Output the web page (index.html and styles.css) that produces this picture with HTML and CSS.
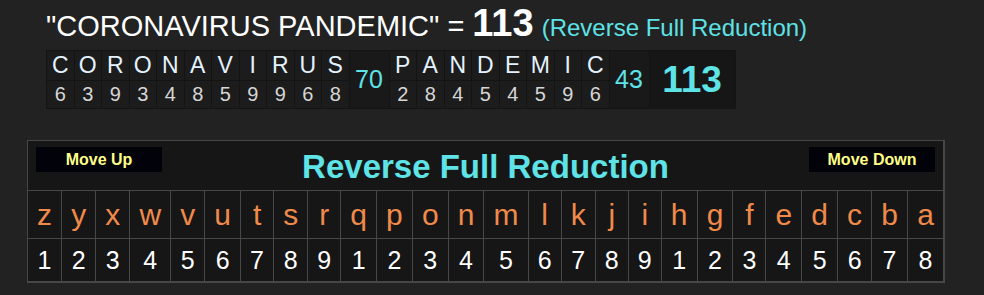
FILE: index.html
```html
<!DOCTYPE html>
<html lang="en">
<head>
  <meta charset="UTF-8">
  <title>Reverse Full Reduction</title>
  <link rel="stylesheet" href="styles.css">
</head>
<body>
  <div id="phraseBox">
    <div class="headline">
      <span class="phrase">"CORONAVIRUS PANDEMIC" =</span>
      <span class="total">113</span>
      <span class="cipherName">(Reverse Full Reduction)</span>
    </div>
    <table class="breakdown">
      <tr>
        <td class="ltr">C</td><td class="ltr">O</td><td class="ltr">R</td><td class="ltr">O</td><td class="ltr">N</td><td class="ltr">A</td><td class="ltr">V</td><td class="ltr">I</td><td class="ltr">R</td><td class="ltr">U</td><td class="ltr">S</td>
        <td class="wordSum" rowspan="2">70</td>
        <td class="ltr">P</td><td class="ltr">A</td><td class="ltr">N</td><td class="ltr">D</td><td class="ltr">E</td><td class="ltr">M</td><td class="ltr">I</td><td class="ltr">C</td>
        <td class="wordSum" rowspan="2">43</td>
        <td class="grandSum" rowspan="2">113</td>
      </tr>
      <tr>
        <td class="val">6</td><td class="val">3</td><td class="val">9</td><td class="val">3</td><td class="val">4</td><td class="val">8</td><td class="val">5</td><td class="val">9</td><td class="val">9</td><td class="val">6</td><td class="val">8</td>
        <td class="val">2</td><td class="val">8</td><td class="val">4</td><td class="val">5</td><td class="val">4</td><td class="val">5</td><td class="val">9</td><td class="val">6</td>
      </tr>
    </table>
  </div>

  <table class="cipherChart">
    <tr>
      <td class="chartHead" colspan="26">
        <div class="headBar">
          <button class="moveBtn">Move Up</button>
          <span class="chartTitle">Reverse Full Reduction</span>
          <button class="moveBtn">Move Down</button>
        </div>
      </td>
    </tr>
    <tr class="letters">
      <td>z</td><td>y</td><td>x</td><td>w</td><td>v</td><td>u</td><td>t</td><td>s</td><td>r</td><td>q</td><td>p</td><td>o</td><td>n</td>
      <td>m</td><td>l</td><td>k</td><td>j</td><td>i</td><td>h</td><td>g</td><td>f</td><td>e</td><td>d</td><td>c</td><td>b</td><td>a</td>
    </tr>
    <tr class="values">
      <td>1</td><td>2</td><td>3</td><td>4</td><td>5</td><td>6</td><td>7</td><td>8</td><td>9</td><td>1</td><td>2</td><td>3</td><td>4</td>
      <td>5</td><td>6</td><td>7</td><td>8</td><td>9</td><td>1</td><td>2</td><td>3</td><td>4</td><td>5</td><td>6</td><td>7</td><td>8</td>
    </tr>
  </table>
</body>
</html>
```

FILE: styles.css
```css
/* dark calculator look */
body {
  margin: 0;
  padding: 0;
  background: #222222;
  font-family: "Liberation Sans", Arial, sans-serif;
  color: #fff;
}
#phraseBox {
  padding: 3px 0 0 46px;
}
.headline {
  display: flex;
  align-items: baseline;
  gap: 8px;
  height: 47px;
  line-height: 40px;
}
.phrase {
  font-size: 29px;
}
.total {
  font-size: 38px;
  font-weight: bold;
}
.cipherName {
  font-size: 24px;
  color: #5ee3e6;
}

/* letter by letter breakdown */
.breakdown {
  border-collapse: separate;
  border-spacing: 1px;
  background: #141414;
  text-align: center;
}
.breakdown td {
  padding: 0;
}
.ltr {
  width: 26.5px;
  height: 29px;
  background: #1c1c1c;
  font-size: 23px;
  color: #e4f2ff;
}
.val {
  height: 27px;
  background: #1c1c1c;
  font-size: 20px;
  color: #d6d6d6;
}
.wordSum {
  width: 39px;
  font-size: 25px;
  color: #5ee3e6;
  background: #191919;
}
.grandSum {
  width: 85px;
  font-size: 37px;
  font-weight: bold;
  color: #5ee3e6;
  background: #161616;
}

/* cipher chart */
.cipherChart {
  margin: 31px 0 0 27px;
  width: 918px;
  border-collapse: collapse;
  background: #161616;
  border: 1px solid #474747;
  border-bottom-width: 2px;
  border-right-width: 2px;
  text-align: center;
}
.cipherChart td {
  border: 1px solid #474747;
  padding: 0 9px;
}
.cipherChart .chartHead {
  padding: 0;
  height: 49px;
  vertical-align: top;
}
.headBar {
  display: flex;
  justify-content: space-between;
  align-items: flex-start;
  padding: 6px 8px 0 8px;
}
.moveBtn {
  width: 126px;
  height: 25px;
  background: #02020a;
  border: none;
  color: #ffff86;
  font-family: "Liberation Sans", Arial, sans-serif;
  font-size: 16px;
  font-weight: bold;
  padding: 0;
}
.chartTitle {
  font-size: 33px;
  font-weight: bold;
  color: #5ee3e6;
  line-height: 38px;
  margin-top: 1px;
}
.letters td {
  height: 47px;
  font-size: 30px;
  color: #f08a4b;
}
.values td {
  height: 42px;
  font-size: 25px;
  color: #fff;
}
```
